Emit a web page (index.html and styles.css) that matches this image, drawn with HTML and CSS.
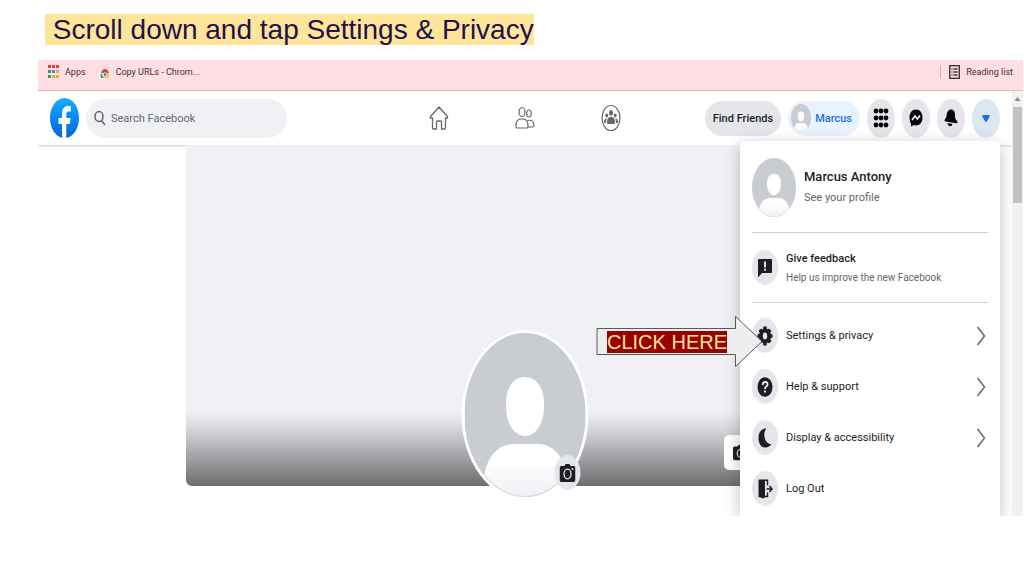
FILE: index.html
```html
<!DOCTYPE html>
<html lang="en">

<head>
    <meta charset="utf-8">
    <title>Settings &amp; Privacy</title>
    <link rel="stylesheet" href="styles.css">
</head>

<body>
    <svg width="0" height="0" class="defs" aria-hidden="true">
        <defs>
            <linearGradient id="fbBlue" x1="0" y1="0" x2="0" y2="1">
                <stop offset="0" stop-color="#18acfe" />
                <stop offset="1" stop-color="#0163e0" />
            </linearGradient>
            <linearGradient id="shoulders" x1="0" y1="0" x2="0" y2="1">
                <stop offset="0" stop-color="#fff" />
                <stop offset="0.3" stop-color="#fff" />
                <stop offset="1" stop-color="#eff0f4" />
            </linearGradient>
            <clipPath id="round"><ellipse cx="60" cy="82" rx="60" ry="82" /></clipPath>
            <symbol id="person" viewBox="0 0 120 164" preserveAspectRatio="none">
                <g clip-path="url(#round)">
                    <rect width="120" height="164" fill="#c9ccd1" />
                    <path d="M60 44c12 0 19 11 19 28 0 18-8 31-19 31S41 90 41 72c0-17 7-28 19-28z" fill="#fff" />
                    <path d="M19 164v-20c3-19 13-32 28-33h27c15 1 25 14 28 33v20z" fill="url(#shoulders)" />
                </g>
                <ellipse cx="60" cy="82" rx="59.5" ry="81.5" fill="none" stroke="#c9ccd1" stroke-width="1" stroke-opacity=".6" />
            </symbol>
            <symbol id="camera" viewBox="0 0 16 20" preserveAspectRatio="none">
                <path d="M2 3h3l1-2h4l1 2h3q2 0 2 2v12q0 2-2 2H2q-2 0-2-2V5q0-2 2-2z" fill="#1c1e21" />
                <ellipse cx="8" cy="11" rx="3.5" ry="4.8" fill="none" stroke="#e4e6eb" stroke-width="1.3" />
                <circle cx="13" cy="6" r="1" fill="#e4e6eb" />
            </symbol>
            <symbol id="chevron" viewBox="0 0 10 20">
                <path d="M1.500 1L8.500 10L1.500 19" fill="none" stroke="#65676b" stroke-width="1.500" />
            </symbol>
        </defs>
    </svg>

    <h1><mark>&nbsp;Scroll down and tap Settings &amp; Privacy</mark></h1>

    <div class="browser">
        <div class="bookmarks">
            <a href="#">
                <svg width="11" height="13" viewBox="0 0 11 13">
                    <path d="M0 0h3v3H0zM4 0h3v3H4zM8 0h3v3H8z" fill="#e0443e" />
                    <path d="M0 5h3v3H0z" fill="#3d9a50" />
                    <path d="M4 5h3v3H4z" fill="#4285f4" />
                    <path d="M8 5h3v3H8zM4 10h3v3H4zM8 10h3v3H8z" fill="#eeb03c" />
                    <path d="M0 10h3v3H0z" fill="#3d9a50" />
                </svg>
                Apps
            </a>
            <a href="#">
                <svg width="10" height="14" viewBox="0 0 10 14">
                    <path d="M3 4V2q0-1 2-1t2 1v2" fill="none" stroke="#d8d8d8" />
                    <path d="M0 4h10v9H0z" fill="#f1efed" />
                    <path d="M1 8q1-4 4-4t4 4H5z" fill="#df4033" />
                    <path d="M1 8l3 5H1Q0 11 1 8z" fill="#34a252" />
                    <path d="M9 8q1 3-1 5H4l2-5z" fill="#fbc52c" />
                    <ellipse cx="5" cy="9.500" rx="1.800" ry="2" fill="#4285f4" stroke="#fff" stroke-width=".6" />
                </svg>
                Copy URLs - Chrom...
            </a>
            <a href="#" class="reading">
                <svg width="11" height="14" viewBox="0 0 11 14" fill="none" stroke="#3c3235">
                    <rect x=".7" y=".7" width="9.600" height="12.600" stroke-width="1.400" />
                    <path d="M2.500 4h1M4.500 4h4M2.500 7h1M4.500 7h4M2.500 10h1M4.500 10h4" stroke-width="1.300" />
                </svg>
                Reading list
            </a>
        </div>

        <div class="viewport">
            <div class="page">
                <header>
                    <div class="start">
                        <a href="#" class="logo" aria-label="Facebook">
                            <svg width="29" height="40" viewBox="0 0 29 40">
                                <ellipse cx="14.500" cy="20" rx="14.500" ry="20" fill="url(#fbBlue)" />
                                <path d="M12 40V26H8.500v-6H12v-4c0-5 2-8 5.800-8 1.200 0 2.200.2 3 .4v5h-2c-1.800 0-2.500 1.200-2.500 3.200V20h4.300l-.8 6h-3.500v14q-2 .4-4.300 0z" fill="#fff" />
                            </svg>
                        </a>
                        <label class="search">
                            <svg width="12" height="16" viewBox="0 0 12 16" fill="none" stroke="#606367" stroke-width="1.500">
                                <ellipse cx="5" cy="6.500" rx="4" ry="5" />
                                <path d="M7.500 10.500l3.500 4.500" />
                            </svg>
                            <input type="text" placeholder="Search Facebook" aria-label="Search Facebook">
                        </label>
                    </div>

                    <nav>
                        <a href="#" aria-label="Home">
                            <svg width="20" height="26" viewBox="0 0 20 26" fill="none" stroke="#65676b" stroke-width="1.300" stroke-linejoin="round">
                                <path d="M10 2L1.500 11.500v1.500h2v10q0 1 1 1h3v-7q0-1 1-1h3q1 0 1 1v7h3q1 0 1-1V13h2v-1.500z" />
                            </svg>
                        </a>
                        <a href="#" aria-label="Friends">
                            <svg width="20" height="24" viewBox="0 0 20 24" fill="none" stroke="#65676b" stroke-width="1.200">
                                <ellipse cx="7" cy="6" rx="3" ry="4.500" />
                                <ellipse cx="14" cy="7.500" rx="2.300" ry="3.500" />
                                <path d="M1 20c0-5 2-7 5-7h2c3 0 5 2 5 7q0 2-1 2H2q-1 0-1-2zM12.500 14.500c4-1 6.500 1 6.500 5q0 1.500-1 1.500h-5" />
                            </svg>
                        </a>
                        <a href="#" aria-label="Groups">
                            <svg width="20" height="28" viewBox="0 0 20 28" fill="#65676b">
                                <ellipse cx="10" cy="14" rx="9" ry="12.500" fill="none" stroke="#65676b" stroke-width="1.200" />
                                <ellipse cx="10" cy="9" rx="2" ry="2.800" />
                                <ellipse cx="5.800" cy="11.500" rx="1.400" ry="2" />
                                <ellipse cx="14.200" cy="11.500" rx="1.400" ry="2" />
                                <path d="M6 19c0-4 1-6 3-6h2c2 0 3 2 3 6q0 1-1 1H7q-1 0-1-1zM5.500 14.500C3.500 14.500 3 16 3 19h2zM14.500 14.500c2 0 2.500 1.500 2.500 4.500h-2z" />
                            </svg>
                        </a>
                    </nav>

                    <div class="end">
                        <button class="pill">Find Friends</button>
                        <button class="pill me">
                            <svg width="20" height="28"><use href="#person" /></svg>
                            Marcus
                        </button>
                        <button class="round" aria-label="Menu">
                            <svg width="16" height="20" viewBox="0 0 16 20">
                                <path d="M3 3v0M8 3v0M13 3v0M3 10v0M8 10v0M13 10v0M3 17v0M8 17v0M13 17v0" stroke="#050505" stroke-width="4.800" stroke-linecap="round" />
                            </svg>
                        </button>
                        <button class="round" aria-label="Messenger">
                            <svg width="14" height="18" viewBox="0 0 14 18">
                                <path d="M7 0.500c4 0 6.500 3.500 6.500 8s-2.500 8-6.500 8q-1 0-2-.4L2 17.500v-3C1 13 .5 11 .5 8.500c0-4.500 2.500-8 6.500-8z" fill="#050505" />
                                <path d="M3 11l3-4 2.500 3L11 6.500" fill="none" stroke="#fff" stroke-width="1.500" />
                            </svg>
                        </button>
                        <button class="round" aria-label="Notifications">
                            <svg width="14" height="18" viewBox="0 0 14 18">
                                <path d="M7 .5c3 0 4 2.500 4 5v3c0 2 2.500 3 2.500 4.800 0 1-.7 1.200-1.500 1L1.500 12.500c-1-.2-1.200-1-.8-1.800C1.500 9 2.500 9 2.700 5.500 3 2.500 4.500.5 7 .5zM3.500 14l5 1q-.5 2.500-2.700 2.200T3.500 14z" fill="#050505" />
                            </svg>
                        </button>
                        <button class="round active" aria-label="Account">
                            <svg width="8" height="9" viewBox="0 0 8 9"><path d="M.5 1h7v2L4.500 8h-1L.5 3z" fill="#1b6fe0" /></svg>
                        </button>
                    </div>
                </header>

                <main>
                    <div class="cover">
                        <button class="edit-cover"><svg width="15" height="17"><use href="#camera" /></svg>Edit Cover Photo</button>
                        <div class="picture">
                            <svg width="121" height="164"><use href="#person" /></svg>
                            <button class="item-icon update" aria-label="Update profile picture">
                                <svg width="16" height="20"><use href="#camera" /></svg>
                            </button>
                        </div>
                    </div>
                </main>

                <div class="menu">
                    <a href="#" class="profile">
                        <svg width="44" height="59"><use href="#person" /></svg>
                        <span><strong>Marcus Antony</strong><small>See your profile</small></span>
                    </a>
                    <hr>
                    <a href="#" class="item feedback">
                        <span class="item-icon">
                            <svg width="14" height="18" viewBox="0 0 14 18">
                                <path d="M1 0h12q1 0 1 1v12q0 1-1 1H4l-3.500 4Q0 18 0 17V1q0-1 1-1z" fill="#1c1e21" />
                                <path d="M7 2.500v6M7 9.800v2" stroke="#fff" stroke-width="1.700" />
                            </svg>
                        </span>
                        <span><strong>Give feedback</strong><small>Help us improve the new Facebook</small></span>
                    </a>
                    <hr>
                    <a href="#" class="item">
                        <span class="item-icon">
                            <svg width="16" height="20" viewBox="0 0 16 20">
                                <ellipse cx="8" cy="10" rx="4.200" ry="5.400" fill="none" stroke="#1c1e21" stroke-width="4" />
                                <path d="M8 .5v4M8 15.500v4M.5 10h3M12.500 10h3M2.800 3.600l2 2.600M11.200 13.800l2 2.600M13.200 3.600l-2 2.600M4.800 13.800l-2 2.600" stroke="#1c1e21" stroke-width="3.400" />
                            </svg>
                        </span>
                        Settings &amp; privacy
                        <svg class="chevron" width="10" height="20"><use href="#chevron" /></svg>
                    </a>
                    <a href="#" class="item">
                        <span class="item-icon">
                            <svg width="16" height="20" viewBox="0 0 16 20">
                                <ellipse cx="8" cy="10" rx="7.500" ry="9.800" fill="#1c1e21" />
                                <path d="M5.600 8c0-4 5-4 5-.8 0 2.300-2.600 2-2.600 4.800M8 13.500v2" fill="none" stroke="#fff" stroke-width="1.700" />
                            </svg>
                        </span>
                        Help &amp; support
                        <svg class="chevron" width="10" height="20"><use href="#chevron" /></svg>
                    </a>
                    <a href="#" class="item">
                        <span class="item-icon">
                            <svg width="14" height="20" viewBox="0 0 14 20">
                                <path d="M8.500 .5C5 4 5 15 13.500 16.500 11 19 8.500 19.500 7 19.500c-4 0-6.500-4-6.500-9.500S3.500 .5 8.500 .5z" fill="#1c1e21" />
                            </svg>
                        </span>
                        Display &amp; accessibility
                        <svg class="chevron" width="10" height="20"><use href="#chevron" /></svg>
                    </a>
                    <a href="#" class="item">
                        <span class="item-icon">
                            <svg width="15" height="20" viewBox="0 0 15 20">
                                <path d="M1 .5h5.500l.5 2v15l-1 2L.5 18V1.500q0-1 .5-1z" fill="#1c1e21" />
                                <path d="M6 1.200h3.500v5M9.500 13.500v4H6" fill="none" stroke="#1c1e21" stroke-width="1.400" />
                                <path d="M8.500 10h5M11.500 7l2.500 3-2.500 3" fill="none" stroke="#1c1e21" stroke-width="1.600" />
                            </svg>
                        </span>
                        Log Out
                    </a>
                </div>
            </div>

            <div class="scrollbar">
                <svg width="11" height="16" viewBox="0 0 11 16"><path d="M2.500 10L5.500 6l3 4z" fill="#8b8b8b" /></svg>
                <div class="thumb"></div>
            </div>
        </div>

        <div class="arrow">
            <svg width="168" height="53" viewBox="0 0 168 53">
                <path d="M1 13.500H139.500V1.500L166 26.500L139.500 51.500V39.500H1z" fill="#eee" stroke="#595959" />
            </svg>
            <mark>CLICK HERE</mark>
        </div>
    </div>
</body>

</html>
```
FILE: styles.css
```css
:root {
    --text: #1c1e21;
    --muted: #65676b;
    --grey: #e4e6eb;
    --light: #f0f1f5;
}

* {
    box-sizing: border-box;
}

body {
    margin: 0;
    background: #fff;
    font-family: Roboto, "Liberation Sans", sans-serif;
    font-size: 11px;
    color: var(--text);
}

a {
    color: inherit;
    text-decoration: none;
}

button {
    border: 0;
    padding: 0;
    font: inherit;
    color: inherit;
    cursor: pointer;
}

svg {
    display: block;
    flex: none;
}

.defs {
    position: absolute;
}

h1 {
    margin: 0;
    padding: 14px 45px;
    font: 28px/32px "Liberation Sans", Arial, sans-serif;
}

h1 mark {
    background: #ffe599;
    color: #20124d;
}

.browser {
    position: relative;
    margin: 0 1px 60px 38px;
}

.bookmarks {
    display: flex;
    align-items: center;
    gap: 14px;
    height: 31px;
    padding: 0 10px 7px;
    background: #ffdfe4;
    border-bottom: 1px solid #d5bfc4;
    font-size: 9px;
    color: #3c3235;
}

.bookmarks a {
    display: flex;
    align-items: center;
    gap: 6px;
}

.bookmarks .reading {
    margin-left: auto;
    padding-left: 8px;
    border-left: 1px solid #cbb3b8;
}

.viewport {
    display: flex;
}

.page {
    position: relative;
    flex: 1;
    overflow: hidden;
}

header {
    position: relative;
    display: grid;
    grid-template-columns: 1fr auto 1fr;
    align-items: center;
    height: 54px;
    padding: 0 12px;
    background: #fff;
    box-shadow: 0 1px 3px rgba(0, 0, 0, 0.2);
}

.start,
.end {
    display: flex;
    align-items: center;
    gap: 7px;
}

.end {
    justify-content: flex-end;
}

.search {
    display: flex;
    align-items: center;
    gap: 5px;
    width: 201px;
    height: 39px;
    padding: 0 8px;
    border-radius: 20px;
    background: var(--light);
}

.search input {
    flex: 1;
    min-width: 0;
    border: 0;
    padding: 0;
    background: none;
    font: inherit;
    outline: none;
}

.search input::placeholder {
    color: var(--muted);
}

nav {
    display: flex;
}

nav a {
    display: grid;
    place-items: center;
    width: 86px;
}

.pill {
    display: flex;
    align-items: center;
    gap: 4px;
    height: 35px;
    padding: 0 8px;
    border-radius: 18px;
    background: var(--grey);
    font-weight: 500;
    white-space: nowrap;
}

.pill.me {
    padding-left: 3px;
    background: #e7f3ff;
    color: #1b6fe0;
}

.round {
    display: grid;
    place-items: center;
    width: 28px;
    height: 39px;
    border-radius: 50%;
    background: var(--grey);
}

.round.active {
    background: #dbe7f2;
}

main {
    padding: 0 148px 30px;
}

.cover {
    position: relative;
    height: 341px;
    border-radius: 0 0 6px 6px;
    background: linear-gradient(var(--light) 78%, #dddee1 82%, #6c6d6f);
}

.edit-cover {
    position: absolute;
    right: 20px;
    bottom: 16px;
    display: flex;
    align-items: center;
    gap: 6px;
    height: 35px;
    padding: 0 9px;
    border-radius: 5px;
    background: #fff;
}

.picture {
    position: absolute;
    left: 50%;
    bottom: -14px;
    padding: 3px;
    border-radius: 50%;
    background: #fff;
    transform: translateX(-50%);
}

.update {
    position: absolute;
    right: 8px;
    bottom: 10px;
}

.menu {
    position: absolute;
    top: 50px;
    right: 12px;
    bottom: 0;
    width: 260px;
    padding: 17px 12px 0;
    border-radius: 6px 6px 0 0;
    background: #fff;
    box-shadow: 0 4px 16px rgba(0, 0, 0, 0.25);
}

.menu hr {
    margin: 0;
    border: 0;
    border-top: 1px solid #ced0d4;
}

.menu strong,
.menu small {
    display: block;
}

.menu strong {
    font-size: 11px;
    line-height: 20px;
    font-weight: 500;
}

.menu small {
    font-size: 10px;
    line-height: 18px;
    color: var(--muted);
}

.profile {
    display: flex;
    align-items: center;
    gap: 8px;
    padding-bottom: 15px;
}

.menu .profile strong {
    font-size: 13px;
}

.menu .profile small {
    font-size: 11px;
    line-height: 22px;
}

.item {
    display: flex;
    align-items: center;
    gap: 8px;
    height: 51px;
}

.feedback {
    height: 69px;
}

.feedback + hr {
    margin-bottom: 7px;
}

.item-icon {
    display: grid;
    place-items: center;
    flex: none;
    width: 26px;
    height: 35px;
    border-radius: 50%;
    background: var(--grey);
}

.chevron {
    margin-left: auto;
    margin-right: 2px;
}

.scrollbar {
    width: 11px;
    background: #f1f1f1;
}

.thumb {
    height: 96px;
    margin: 0 1px;
    background: #c1c1c1;
}

/* callout pointing at the settings item */
.arrow {
    position: absolute;
    top: 255px;
    right: 259px;
}

.arrow mark {
    position: absolute;
    left: 11px;
    top: 16px;
    background: #990000;
    color: #ffe599;
    font: 20px/22px "Liberation Sans", Arial, sans-serif;
    white-space: nowrap;
}
```
